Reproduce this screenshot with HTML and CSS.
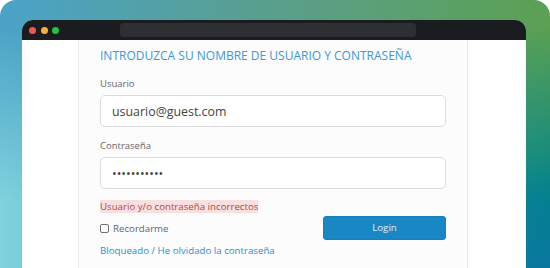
FILE: index.html
```html
<!DOCTYPE html>
<html lang="es">
<head>
<meta charset="utf-8">
<title>Login</title>
<link rel="stylesheet" href="styles.css">
</head>
<body>
<div class="frame">
  <div class="window">
    <div class="titlebar">
      <span class="dot dot-red"></span>
      <span class="dot dot-yellow"></span>
      <span class="dot dot-green"></span>
      <div class="address"></div>
    </div>
    <div class="viewport">
      <form class="panel">
        <h1 class="title">INTRODUZCA SU NOMBRE DE USUARIO Y CONTRASEÑA</h1>
        <div class="field">
          <label class="label" for="user">Usuario</label>
          <input class="input" id="user" type="text" value="usuario@guest.com">
        </div>
        <div class="field">
          <label class="label" for="pass">Contraseña</label>
          <input class="input input-pass" id="pass" type="password" value="xxxxxxxxxxx">
        </div>
        <div class="actions">
          <div class="meta">
            <div class="row"><span class="error">Usuario y/o contraseña incorrectos</span></div>
            <label class="row remember"><input class="check" type="checkbox">Recordarme</label>
            <div class="row"><a class="link" href="#">Bloqueado / He olvidado la contraseña</a></div>
          </div>
          <button class="login" type="button">Login</button>
        </div>
      </form>
    </div>
  </div>
</div>
</body>
</html>
```

FILE: styles.css
```css
html, body {
  margin: 0;
  padding: 0;
  background: #fff;
}

body {
  font-family: "Open Sans", "Noto Sans", sans-serif;
}

.frame {
  position: relative;
  width: 550px;
  height: 268px;
  box-sizing: border-box;
  padding: 20px 24px 0 22px;
  border-radius: 16px 16px 0 0;
  overflow: hidden;
  background: linear-gradient(90deg, #4aa3c8 0%, #5a9f8c 50%, #5aa152 100%);
}

.frame::before {
  content: "";
  position: absolute;
  inset: 0;
  background: linear-gradient(90deg, #80d2dd 0%, #3aa9b8 50%, #00848a 100%);
  -webkit-mask-image: linear-gradient(to bottom, transparent 10%, #000 75%);
  mask-image: linear-gradient(to bottom, transparent 10%, #000 75%);
}

.frame::after {
  content: "";
  position: absolute;
  right: 0;
  bottom: 0;
  width: 24px;
  height: 110px;
  background: linear-gradient(to bottom, rgba(10, 120, 158, 0) 0%, #0a789e 100%);
}

.window {
  position: relative;
  z-index: 1;
  height: 248px;
  display: flex;
  flex-direction: column;
  border-radius: 11px 11px 0 0;
  overflow: hidden;
  background: #fff;
}

.titlebar {
  height: 20px;
  flex: none;
  display: flex;
  align-items: center;
  gap: 4.5px;
  padding-left: 7px;
  background: #1b1c20;
}

.dot {
  width: 7px;
  height: 7px;
  border-radius: 50%;
}

.dot-red { background: #f0584f; }
.dot-yellow { background: #f4b23a; }
.dot-green { background: #22c340; }

.address {
  width: 296px;
  height: 14px;
  margin-left: 56.5px;
  border-radius: 4px;
  background: #2e2f33;
}

.viewport {
  flex: 1;
  display: flex;
  padding-left: 56px;
  background: #fff;
}

.panel {
  width: 390px;
  box-sizing: border-box;
  margin: 0;
  padding: 8px 21px 0;
  border-left: 1px solid #ececec;
  border-right: 1px solid #ececec;
  background: #fcfcfc;
}

.title {
  margin: 0 0 13px;
  font-size: 12px;
  line-height: 16px;
  font-weight: 400;
  color: #3a99d8;
}

.field + .field {
  margin-top: 12px;
}

.label {
  display: block;
  margin-bottom: 5px;
  font-size: 9.5px;
  line-height: 13px;
  color: #666;
}

.input {
  display: block;
  width: 100%;
  height: 32px;
  box-sizing: border-box;
  margin: 0;
  padding: 0 11px;
  border: 1px solid #dcdcdc;
  border-radius: 5px;
  background: #fff;
  font-family: "Open Sans", "Noto Sans", sans-serif;
  font-size: 12.4px;
  color: #444;
  outline: none;
}

.actions {
  display: flex;
  justify-content: space-between;
  align-items: center;
  margin-top: 7px;
}

.meta {
  font-size: 9.7px;
  line-height: 22px;
}

.row {
  display: block;
}

.error {
  background: #f8e0e0;
  color: #b04848;
}

.remember {
  color: #666;
}

.check {
  appearance: none;
  -webkit-appearance: none;
  width: 9px;
  height: 9px;
  box-sizing: border-box;
  margin: 0 4px 0 0;
  border: 1px solid #707070;
  border-radius: 2px;
  background: #fff;
  vertical-align: -1px;
}

.link {
  color: #2e8dd0;
  text-decoration: none;
}

.login {
  width: 123px;
  height: 24px;
  margin: 0 0 3px;
  padding: 0;
  border: 1px solid #1880bc;
  border-radius: 3px;
  background: #1a87c5;
  color: #e6eff7;
  font-family: "Open Sans", "Noto Sans", sans-serif;
  font-size: 9.7px;
}
```
